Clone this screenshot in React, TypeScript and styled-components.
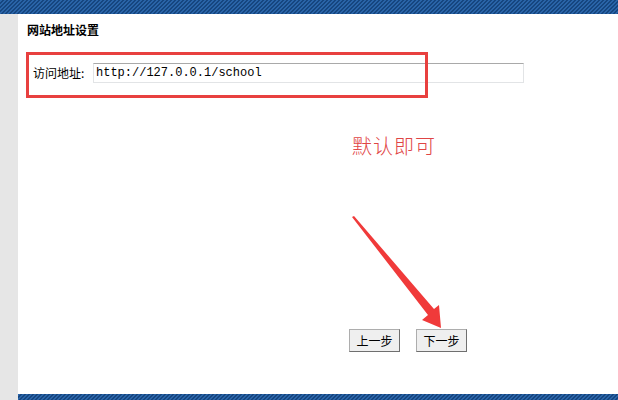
import styled, { createGlobalStyle } from 'styled-components'

const Global = createGlobalStyle`
    html, body {
        margin: 0;
        padding: 0;
        background: #ffffff;
        overflow: hidden;
    }
    body {
        font-family: "Noto Sans CJK SC", "DejaVu Sans", sans-serif;
        font-size: 12px;
        color: #000;
    }
`

const band = `
    background-color: #164680;
    background-image: linear-gradient(
        135deg,
        #2a64a8 25%,
        transparent 25% 50%,
        #2a64a8 50% 75%,
        transparent 75%
    );
    background-size: 4px 4px;
`

const Page = styled.div`
    position: relative;
    width: 618px;
    height: 400px;
    display: flex;
    flex-direction: column;
`

const TopBand = styled.div`
    height: 14px;
    flex-shrink: 0;
    ${band}
`

const Body = styled.div`
    flex: 1;
    display: flex;
`

const Side = styled.div`
    width: 18px;
    background: #e6e6e6;
`

const Main = styled.div`
    flex: 1;
    display: flex;
    flex-direction: column;
`

const Title = styled.h3`
    margin: 9px 0 0;
    padding-left: 9px;
    font-size: 12px;
    line-height: 14px;
    font-weight: bold;
`

const FormRow = styled.div`
    margin-top: 26px;
    padding-left: 15px;
    display: flex;
    align-items: center;
    gap: 4px;
    line-height: 20px;
`

const Label = styled.label`
    font-size: 12px;
    width: 56px;
`

const Input = styled.input`
    box-sizing: border-box;
    width: 431px;
    height: 20px;
    margin: 0;
    padding: 0 2px;
    border: 1px solid #e2e4e6;
    border-top-color: #a9a9a9;
    font-family: "Liberation Mono", "DejaVu Sans Mono", monospace;
    font-size: 12px;
    color: #000;
    outline: none;
`

const Spacer = styled.div`
    flex: 1;
`

const ButtonRow = styled.div`
    display: flex;
    gap: 16px;
    padding-left: 331px;
    margin-bottom: 42px;
`

const Button = styled.button`
    box-sizing: border-box;
    width: 51px;
    height: 23px;
    padding: 0;
    background: #efefef;
    border: 1px solid #adadad;
    border-right-color: #6f6f6f;
    border-bottom-color: #6f6f6f;
    font-family: "Noto Sans CJK SC", sans-serif;
    font-size: 12px;
    color: #000;
`

const BottomBand = styled.div`
    height: 6px;
    ${band}
`

const MarkBox = styled.div`
    position: absolute;
    left: 26px;
    top: 52px;
    width: 402px;
    height: 46px;
    box-sizing: border-box;
    border: 3px solid #e8403f;
    pointer-events: none;
`

const Hint = styled.div`
    position: absolute;
    left: 352px;
    top: 132px;
    font-size: 20px;
    line-height: 28px;
    font-weight: 300;
    color: #df4545;
    letter-spacing: 1px;
`

const ArrowLayer = styled.svg`
    position: absolute;
    left: 0;
    top: 0;
    pointer-events: none;
`

export default function App() {
    return (
        <>
            <Global />
            <Page>
                <TopBand />
                <Body>
                    <Side />
                    <Main>
                        <Title>网站地址设置</Title>
                        <FormRow>
                            <Label>访问地址:</Label>
                            <Input defaultValue="http://127.0.0.1/school" />
                        </FormRow>
                        <Spacer />
                        <ButtonRow>
                            <Button>上一步</Button>
                            <Button>下一步</Button>
                        </ButtonRow>
                        <BottomBand />
                    </Main>
                </Body>
                <MarkBox />
                <Hint>默认即可</Hint>
                <ArrowLayer width="618" height="400" viewBox="0 0 618 400">
                    <polygon
                        points="352,217 354,216 434,309 439,305 441,328 422,320 428,315"
                        fill="#f03a3a"
                    />
                </ArrowLayer>
            </Page>
        </>
    )
}
